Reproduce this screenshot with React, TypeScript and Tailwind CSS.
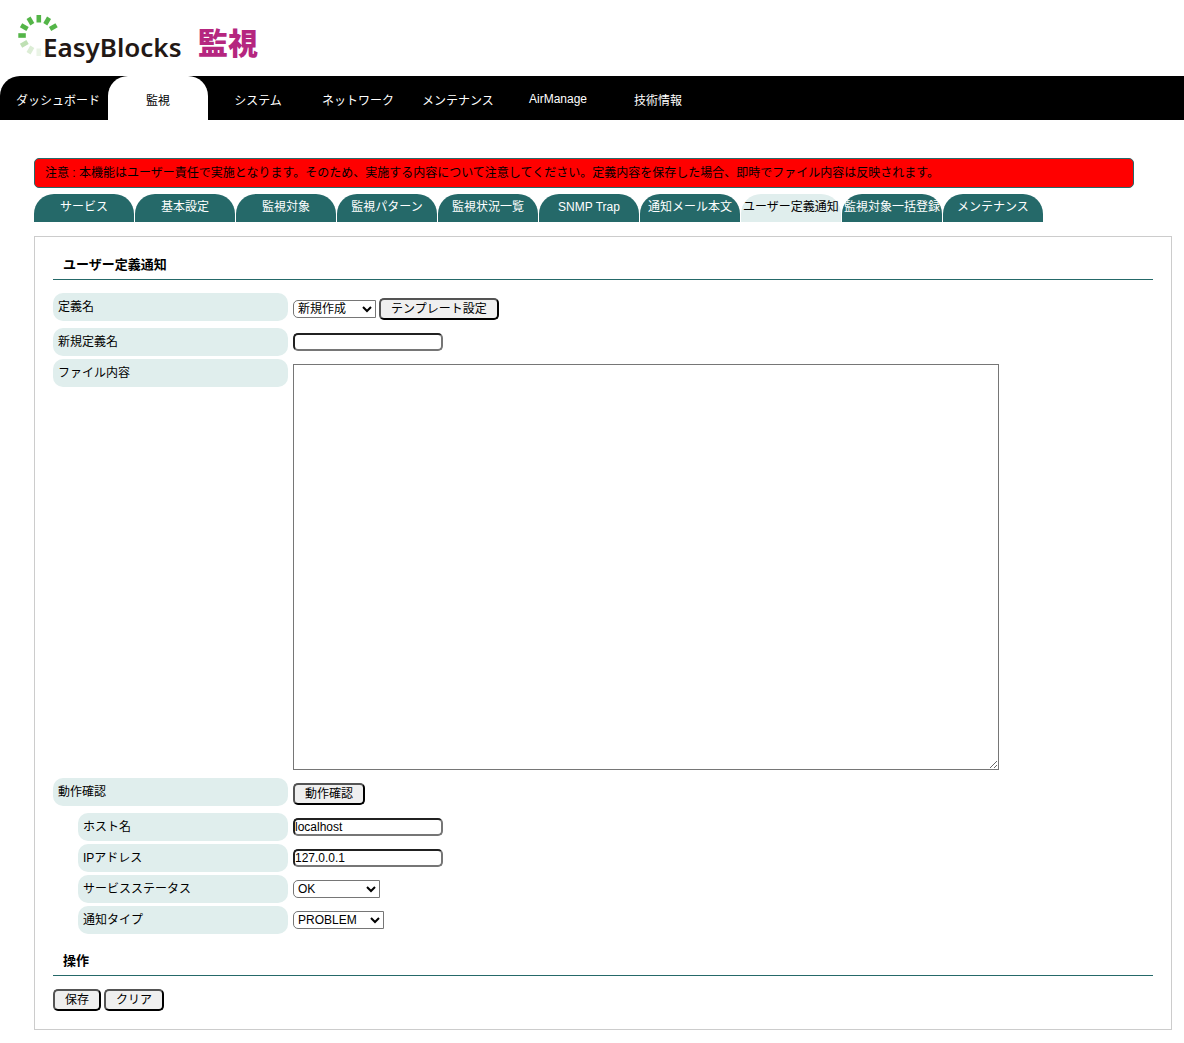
import type { ReactNode } from "react";

const navItems = ["ダッシュボード", "監視", "システム", "ネットワーク", "メンテナンス", "AirManage", "技術情報"];

const tabs = [
  "サービス",
  "基本設定",
  "監視対象",
  "監視パターン",
  "監視状況一覧",
  "SNMP Trap",
  "通知メール本文",
  "ユーザー定義通知",
  "監視対象一括登録",
  "メンテナンス",
];

const inputClass =
  "h-[18px] w-[150px] rounded-[5px] border-2 border-[#767676] bg-white [border-style:inset] leading-[14px]";
const selectClass =
  "h-[18px] rounded-l-[5px] border border-[#767676] bg-white leading-4";

function navClass(item: string) {
  if (item === "監視") return "w-[100px] rounded-t-[20px] bg-white text-center leading-[50px] text-black";
  if (item === "AirManage") return "w-[100px] text-center leading-[46px] whitespace-nowrap text-white";
  return "w-[100px] text-center leading-[50px] whitespace-nowrap text-white";
}

function Logo() {
  const marks = [
    { angle: 270, color: "#54b548" },
    { angle: 300, color: "#54b548" },
    { angle: 330, color: "#54b548" },
    { angle: 0, color: "#54b548" },
    { angle: 30, color: "#54b548" },
    { angle: 60, color: "#54b548" },
    { angle: 240, color: "#bfe0b4" },
    { angle: 210, color: "#dcedd5" },
    { angle: 180, color: "#eaf4e6" },
  ];
  return (
    <svg width="260" height="66" viewBox="0 0 260 66" role="img" aria-label="EasyBlocks 監視">
      {marks.map((m) => (
        <rect
          key={m.angle}
          x="36.5"
          y="15"
          width="4.6"
          height="7.5"
          fill={m.color}
          transform={`rotate(${m.angle} 38.8 35.5)`}
        />
      ))}
      <text x="43" y="57" fontFamily="'Noto Sans', sans-serif" fontWeight="600" fontSize="26" fill="#231815">
        EasyBlocks
      </text>
      <text x="198" y="54" fontFamily="'Noto Sans CJK JP', sans-serif" fontWeight="900" fontSize="30" fill="#b5267f">
        監視
      </text>
    </svg>
  );
}

function Heading({ children }: { children: ReactNode }) {
  return (
    <h2 className="border-b border-[#256969] px-2.5 pt-px pb-[5px] text-[13px] leading-[18px] font-bold">{children}</h2>
  );
}

function Row({
  label,
  htmlFor,
  indent = false,
  children,
}: {
  label: string;
  htmlFor: string;
  indent?: boolean;
  children: ReactNode;
}) {
  return (
    <div className="flex items-start gap-[5px]">
      <div className={indent ? "w-[235px] shrink-0 pl-[25px]" : "w-[235px] shrink-0"}>
        <label htmlFor={htmlFor} className="block h-7 rounded-[10px] bg-[#e0eeed] px-[5px] leading-7">
          {label}
        </label>
      </div>
      <div className="flex min-w-0 flex-1 items-center gap-[3px] pt-[5px]">{children}</div>
    </div>
  );
}

function Button({ id, children }: { id?: string; children: ReactNode }) {
  return (
    <button
      id={id}
      type="button"
      className="mb-[5px] h-[22px] rounded-[5px] border-2 border-black bg-[#efefef] px-2.5 leading-[18px] [border-style:outset]"
    >
      {children}
    </button>
  );
}

export default function App() {
  return (
    <div className="bg-white pb-[13px] font-['Liberation_Sans','Noto_Sans_CJK_JP',sans-serif] text-xs text-black">
      <header className="h-[76px]">
        <Logo />
      </header>
      <nav className="flex h-11 rounded-tl-[20px] bg-black pl-2">
        {navItems.map((item) => (
          <a key={item} href="#" aria-current={item === "監視" ? "page" : undefined} className={navClass(item)}>
            {item}
          </a>
        ))}
      </nav>
      <main className="pt-[38px] pr-3 pl-[34px]">
        <p className="mr-[38px] rounded-[5px] border border-[#256969] bg-[#ff0000] px-2.5 leading-7">
          注意 : 本機能はユーザー責任で実施となります。そのため、実施する内容について注意してください。定義内容を保存した場合、即時でファイル内容は反映されます。
        </p>
        <nav className="mt-1.5 flex gap-px">
          {tabs.map((tab) => (
            <a
              key={tab}
              href="#"
              aria-current={tab === "ユーザー定義通知" ? "page" : undefined}
              className={
                tab === "ユーザー定義通知"
                  ? "flex h-7 w-[100px] justify-center rounded-t-[20px] bg-[#e0eeed] leading-[26px] whitespace-nowrap text-black"
                  : "flex h-7 w-[100px] justify-center rounded-t-[20px] bg-[#256969] leading-[26px] whitespace-nowrap text-white"
              }
            >
              {tab}
            </a>
          ))}
        </nav>
        <section className="mt-3.5 border border-[#cccccc] p-[18px]">
          <Heading>ユーザー定義通知</Heading>
          <form className="mt-[13px] flex flex-col gap-[3px]">
            <Row label="定義名" htmlFor="definition">
              <select id="definition" className={`${selectClass} mb-[5px] w-[83px]`}>
                <option>新規作成</option>
              </select>
              <Button>テンプレート設定</Button>
            </Row>
            <Row label="新規定義名" htmlFor="new-name">
              <input id="new-name" type="text" className={inputClass} />
            </Row>
            <Row label="ファイル内容" htmlFor="content">
              <textarea
                id="content"
                className="mb-[5px] block h-[406px] w-[706px] max-w-full resize border border-[#767676] bg-white p-0.5"
              />
            </Row>
            <Row label="動作確認" htmlFor="check">
              <Button id="check">動作確認</Button>
            </Row>
            <Row label="ホスト名" htmlFor="host" indent>
              <input id="host" type="text" defaultValue="localhost" className={inputClass} />
            </Row>
            <Row label="IPアドレス" htmlFor="ip" indent>
              <input id="ip" type="text" defaultValue="127.0.0.1" className={inputClass} />
            </Row>
            <Row label="サービスステータス" htmlFor="status" indent>
              <select id="status" className={`${selectClass} w-[87px]`}>
                <option>OK</option>
              </select>
            </Row>
            <Row label="通知タイプ" htmlFor="type" indent>
              <select id="type" className={`${selectClass} w-[91px]`}>
                <option>PROBLEM</option>
              </select>
            </Row>
          </form>
          <div className="mt-[17px]">
            <Heading>操作</Heading>
          </div>
          <div className="mt-[13px] -mb-[5px] flex gap-[3px]">
            <Button>保存</Button>
            <Button>クリア</Button>
          </div>
        </section>
      </main>
    </div>
  );
}
